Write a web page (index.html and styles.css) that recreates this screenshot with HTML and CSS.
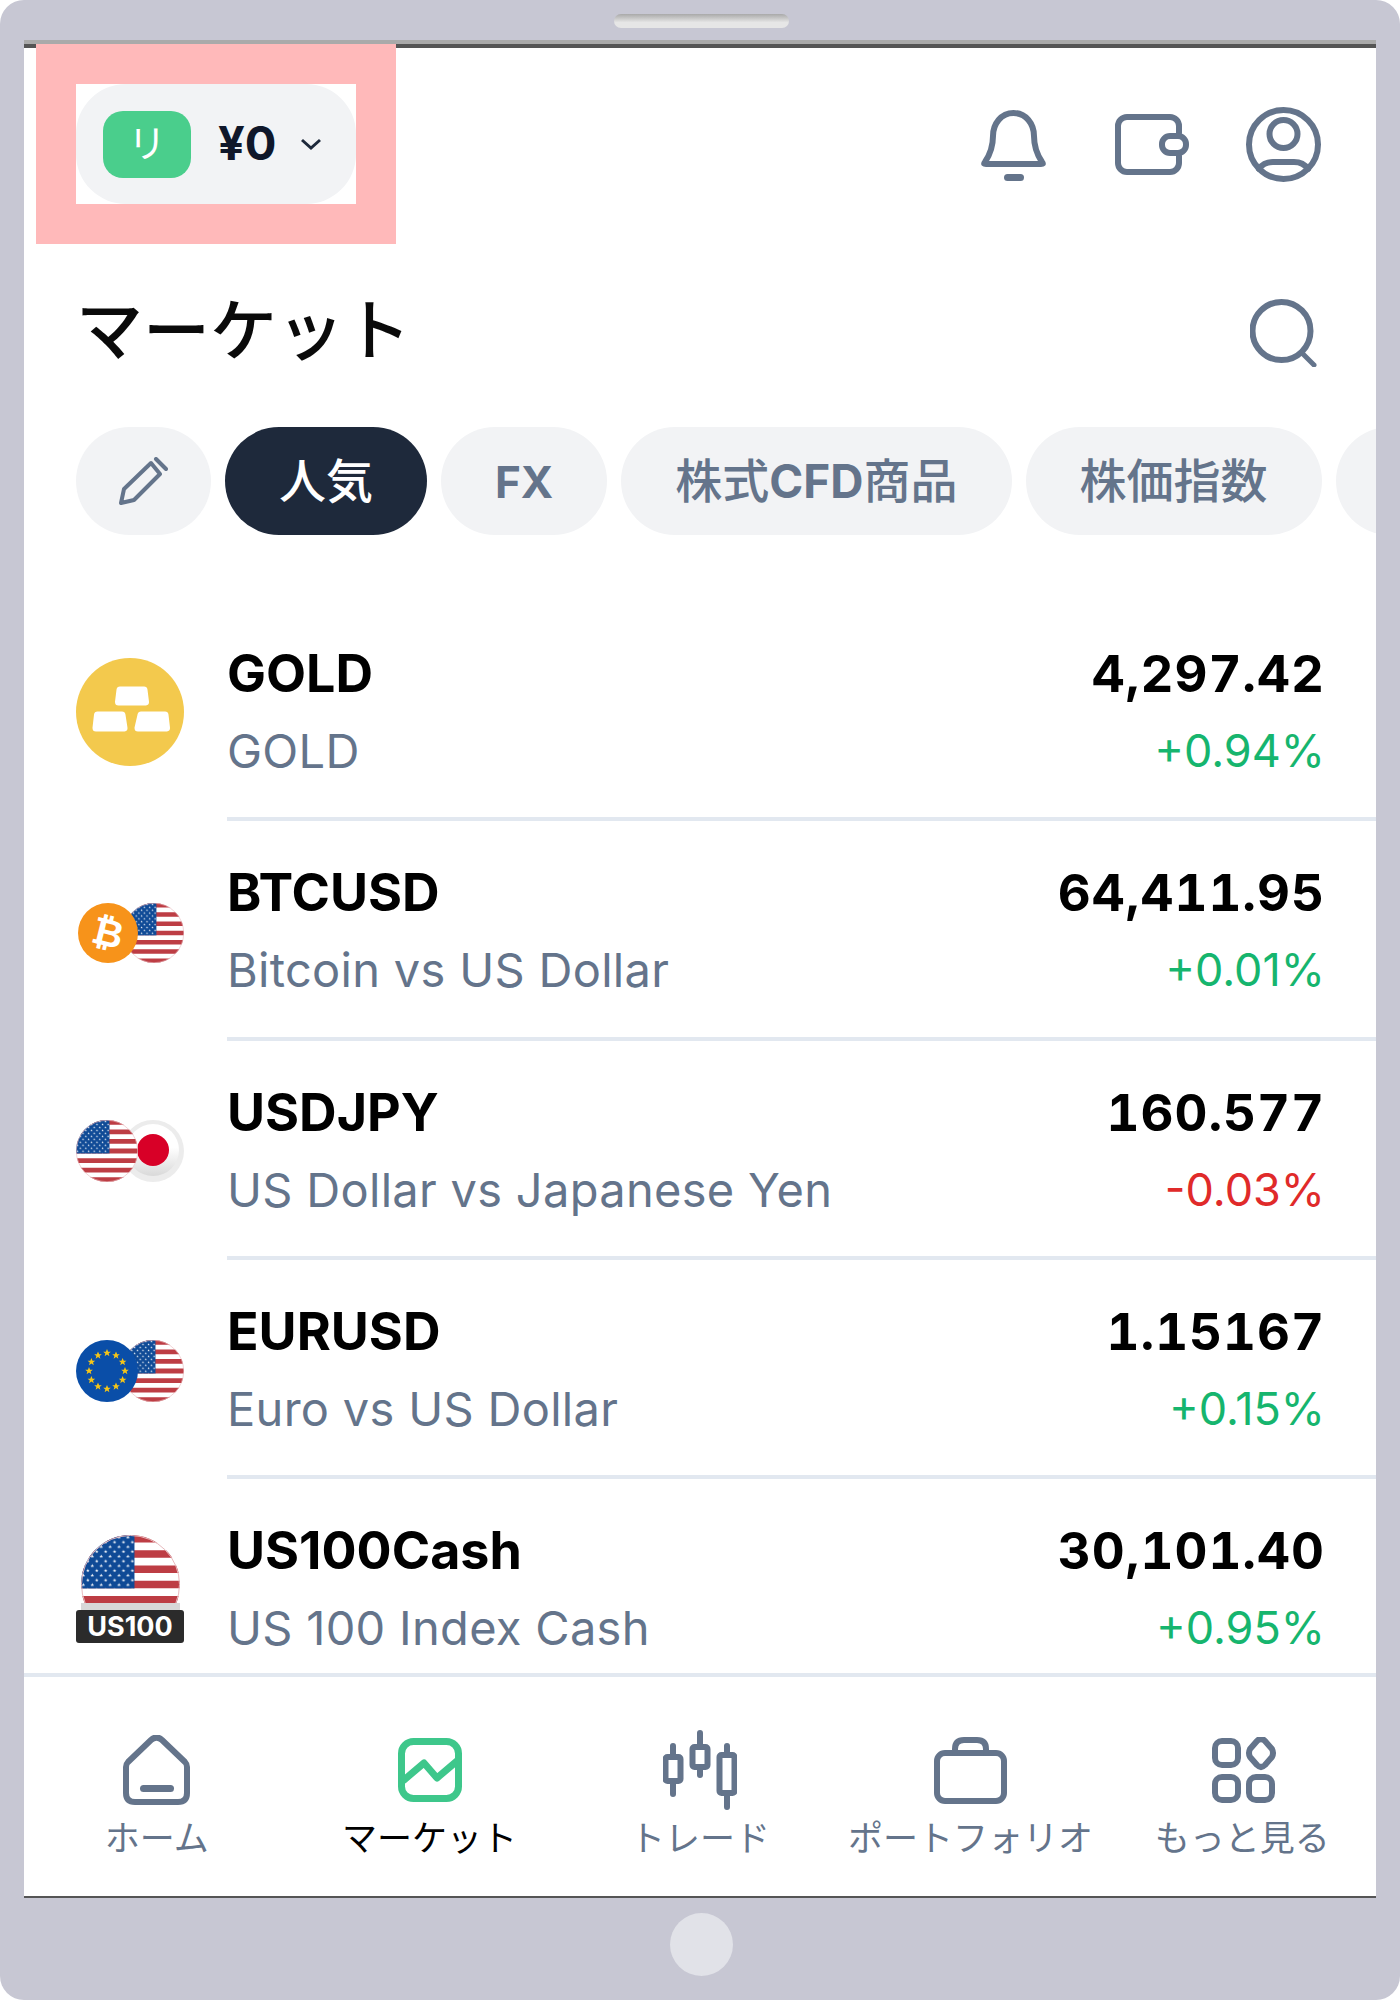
FILE: index.html
```html
<!DOCTYPE html>
<html lang="ja">
<head>
    <meta charset="utf-8">
    <title>マーケット</title>
    <link rel="stylesheet" href="styles.css">
</head>
<body>
    <svg class="defs" width="0" height="0">
        <defs>
            <polygon id="star" points="0,-1 0.29,-0.31 0.95,-0.31 0.41,0.12 0.59,0.81 0,0.38 -0.59,0.81 -0.41,0.12 -0.95,-0.31 -0.29,-0.31"/>
            <pattern id="usStars" width="9" height="9.6" patternUnits="userSpaceOnUse">
                <use href="#star" transform="translate(2.4 2.4) scale(1.9)" fill="#fff"/>
                <use href="#star" transform="translate(6.9 7.2) scale(1.9)" fill="#fff"/>
            </pattern>
            <clipPath id="roundClip"><circle cx="50" cy="50" r="50"/></clipPath>
            <symbol id="flagUs" viewBox="0 0 100 100">
                <g clip-path="url(#roundClip)">
                    <rect width="100" height="100" fill="#fff"/>
                    <path d="M0 3.8H100M0 19.2H100M0 34.6H100M0 50H100M0 65.4H100M0 80.8H100M0 96.2H100" stroke="#bd3d44" stroke-width="7.7"/>
                    <rect width="54" height="54" fill="#0f4a96"/>
                    <rect width="54" height="54" fill="url(#usStars)"/>
                </g>
                <circle cx="50" cy="50" r="49.5" fill="none" stroke="#e8b9bd" stroke-width="1"/>
            </symbol>
        </defs>
    </svg>

    <div class="device">
        <div class="bezel-top"><div class="speaker"></div></div>

        <div class="screen">
            <header class="topbar">
                <div class="highlight">
                    <div class="balance">
                        <span class="badge">リ</span>
                        <span class="amount">¥0</span>
                        <svg class="chevron" width="22" height="12" viewBox="0 0 22 12"><path d="M2 2L11 10L20 2"/></svg>
                    </div>
                </div>
                <div class="top-icons">
                    <svg class="icon bell" width="67" height="71" viewBox="0 0 67 71">
                        <path d="M33.5 3C21 3 13 14 13 26C13 36 11 43 5 52C3.5 54 4 54 6 54H61C63 54 63.5 54 62 52C56 43 54 36 54 26C54 14 46 3 33.5 3Z"/>
                        <rect class="solid" x="24" y="64" width="20" height="7" rx="3.5"/>
                    </svg>
                    <svg class="icon wallet" width="74" height="61" viewBox="0 0 74 61">
                        <path d="M64 19V12A9 9 0 0 0 55 3H12A9 9 0 0 0 3 12V49A9 9 0 0 0 12 58H55A9 9 0 0 0 64 49V42"/>
                        <rect x="47" y="22" width="24" height="17" rx="8"/>
                    </svg>
                    <svg class="icon profile" width="75" height="75" viewBox="0 0 75 75">
                        <circle cx="37.5" cy="37.5" r="34.5"/>
                        <circle cx="37.5" cy="27" r="14"/>
                        <path d="M13 62C17 56 22 55 27 55H48C53 55 58 56 62 62"/>
                    </svg>
                </div>
            </header>

            <div class="title-row">
                <h1 class="title">マーケット</h1>
                <svg class="icon search" width="67" height="68" viewBox="0 0 67 68">
                    <circle cx="31.5" cy="32" r="29"/>
                    <path class="thin" d="M52 54L64 66"/>
                </svg>
            </div>

            <nav class="tabs">
                <div class="tab tab-edit">
                    <svg class="icon pencil" width="49" height="48" viewBox="0 0 49 48">
                        <path d="M2 46L5 32L32 6L41 17L15 43Z"/>
                        <path d="M37 2L47 12"/>
                    </svg>
                </div>
                <div class="tab active">人気</div>
                <div class="tab tab-fx"><span class="latin">FX</span></div>
                <div class="tab">株式<span class="latin">CFD</span>商品</div>
                <div class="tab">株価指数</div>
                <div class="tab tab-empty"></div>
            </nav>

            <main class="list">
                <div class="row">
                    <div class="row-icon">
                        <svg width="108" height="108" viewBox="0 0 108 108">
                            <circle cx="54" cy="54" r="54" fill="#f3c94d"/>
                            <g fill="#fff" stroke="#fff" stroke-width="7" stroke-linejoin="round">
                                <polygon points="44,32 68,32 69.5,44 42.5,44"/>
                                <polygon points="21.5,57 46,57 48,70 20,70"/>
                                <polygon points="65,57 89,57 90.5,70 62,70"/>
                            </g>
                        </svg>
                    </div>
                    <div class="row-body">
                        <div class="row-left">
                            <div class="name">GOLD</div>
                            <div class="desc">GOLD</div>
                        </div>
                        <div class="row-right">
                            <div class="price">4,297.42</div>
                            <div class="change up">+0.94%</div>
                        </div>
                    </div>
                </div>

                <div class="row">
                    <div class="row-icon pair btc-pair">
                        <svg class="flag back" width="60" height="60"><use href="#flagUs"/></svg>
                        <svg class="flag front btc-coin" width="60" height="60" viewBox="0 0 60 60">
                            <circle cx="30" cy="30" r="30" fill="#f7931a"/>
                            <text class="btc" x="30" y="43" text-anchor="middle" transform="rotate(14 30 30)">₿</text>
                        </svg>
                    </div>
                    <div class="row-body">
                        <div class="row-left">
                            <div class="name">BTCUSD</div>
                            <div class="desc">Bitcoin vs US Dollar</div>
                        </div>
                        <div class="row-right">
                            <div class="price">64,411.95</div>
                            <div class="change up">+0.01%</div>
                        </div>
                    </div>
                </div>

                <div class="row">
                    <div class="row-icon pair">
                        <svg class="flag back" width="62" height="62" viewBox="0 0 62 62">
                            <defs>
                                <linearGradient id="jpShade" x1="0" y1="0" x2="0" y2="1">
                                    <stop offset="0.45" stop-color="#ffffff"/>
                                    <stop offset="1" stop-color="#d9d9d9"/>
                                </linearGradient>
                            </defs>
                            <circle cx="31" cy="31" r="31" fill="#ececec"/>
                            <circle cx="31" cy="30" r="26" fill="url(#jpShade)"/>
                            <circle cx="31" cy="30" r="16" fill="#d80027"/>
                        </svg>
                        <svg class="flag front" width="62" height="62"><use href="#flagUs"/></svg>
                    </div>
                    <div class="row-body">
                        <div class="row-left">
                            <div class="name">USDJPY</div>
                            <div class="desc">US Dollar vs Japanese Yen</div>
                        </div>
                        <div class="row-right">
                            <div class="price">160.577</div>
                            <div class="change down">-0.03%</div>
                        </div>
                    </div>
                </div>

                <div class="row">
                    <div class="row-icon pair">
                        <svg class="flag back" width="62" height="62"><use href="#flagUs"/></svg>
                        <svg class="flag front" width="62" height="62" viewBox="0 0 62 62">
                            <circle cx="31" cy="31" r="31" fill="#0a4ea8"/>
                            <g fill="#f5c518">
                                <use href="#star" transform="translate(31 13) scale(4)"/>
                                <use href="#star" transform="translate(40 15.4) scale(4)"/>
                                <use href="#star" transform="translate(46.6 22) scale(4)"/>
                                <use href="#star" transform="translate(49 31) scale(4)"/>
                                <use href="#star" transform="translate(46.6 40) scale(4)"/>
                                <use href="#star" transform="translate(40 46.6) scale(4)"/>
                                <use href="#star" transform="translate(31 49) scale(4)"/>
                                <use href="#star" transform="translate(22 46.6) scale(4)"/>
                                <use href="#star" transform="translate(15.4 40) scale(4)"/>
                                <use href="#star" transform="translate(13 31) scale(4)"/>
                                <use href="#star" transform="translate(15.4 22) scale(4)"/>
                                <use href="#star" transform="translate(22 15.4) scale(4)"/>
                            </g>
                        </svg>
                    </div>
                    <div class="row-body">
                        <div class="row-left">
                            <div class="name">EURUSD</div>
                            <div class="desc">Euro vs US Dollar</div>
                        </div>
                        <div class="row-right">
                            <div class="price">1.15167</div>
                            <div class="change up">+0.15%</div>
                        </div>
                    </div>
                </div>

                <div class="row">
                    <div class="row-icon index">
                        <div class="index-flag"><svg width="99" height="99"><use href="#flagUs"/></svg></div>
                        <div class="index-label">US100</div>
                    </div>
                    <div class="row-body">
                        <div class="row-left">
                            <div class="name">US100Cash</div>
                            <div class="desc">US 100 Index Cash</div>
                        </div>
                        <div class="row-right">
                            <div class="price">30,101.40</div>
                            <div class="change up">+0.95%</div>
                        </div>
                    </div>
                </div>
            </main>

            <footer class="bottom-nav">
                <div class="nav-item nav-home">
                    <div class="nav-icon">
                        <svg class="icon" width="67" height="70" viewBox="0 0 67 70">
                            <path d="M3 32Q3 29 5 27L28 5Q33.5 0 39 5L62 27Q64 29 64 32V58Q64 67 55 67H12Q3 67 3 58Z"/>
                            <rect class="solid" x="17" y="50" width="34" height="7" rx="3.5"/>
                        </svg>
                    </div>
                    <span class="nav-label">ホーム</span>
                </div>
                <div class="nav-item current">
                    <div class="nav-icon">
                        <svg class="icon market" width="64" height="64" viewBox="0 0 64 64">
                            <rect x="3.5" y="3.5" width="57" height="57" rx="12"/>
                            <path d="M6 42L26 25L39 40L59 23"/>
                        </svg>
                    </div>
                    <span class="nav-label">マーケット</span>
                </div>
                <div class="nav-item">
                    <div class="nav-icon">
                        <svg class="icon" width="74" height="80" viewBox="0 0 74 80">
                            <path d="M10 16V27M10 51V64M37 3V17M37 37V45M64 16V25M64 63V77"/>
                            <rect x="2.5" y="27" width="15" height="24" rx="2"/>
                            <rect x="29.5" y="17" width="15" height="20" rx="2"/>
                            <rect x="56.5" y="25" width="15" height="38" rx="2"/>
                        </svg>
                    </div>
                    <span class="nav-label">トレード</span>
                </div>
                <div class="nav-item">
                    <div class="nav-icon">
                        <svg class="icon" width="73" height="67" viewBox="0 0 73 67">
                            <rect x="3" y="16" width="67" height="48" rx="8"/>
                            <path d="M21 16V12Q21 3 30 3H43Q52 3 52 12V16"/>
                        </svg>
                    </div>
                    <span class="nav-label">ポートフォリオ</span>
                </div>
                <div class="nav-item nav-more">
                    <div class="nav-icon">
                        <svg class="icon" width="65" height="66" viewBox="0 0 65 66">
                            <rect x="3" y="4" width="23" height="24" rx="7"/>
                            <rect x="3" y="40" width="23" height="23" rx="7"/>
                            <rect x="37" y="40" width="23" height="23" rx="7"/>
                            <path d="M45 4Q49 0 53 4L60 12Q62 16 60 20L53 28Q49 32 45 28L38 20Q36 16 38 12Z"/>
                        </svg>
                    </div>
                    <span class="nav-label">もっと見る</span>
                </div>
            </footer>
        </div>

        <div class="bezel-bottom"><div class="home-button"></div></div>
    </div>
</body>
</html>
```

FILE: styles.css
```css
* {
    box-sizing: border-box;
}
body {
    margin: 0;
    background-color: #fff;
    font-family: Inter, "Noto Sans CJK JP", sans-serif;
}
.defs {
    display: block;
    height: 0;
}
.device {
    display: flex;
    flex-direction: column;
    width: 1400px;
    height: 2000px;
    padding: 0 24px;
    background-color: #c7c7d3;
    border-radius: 24px;
}
.bezel-top {
    display: flex;
    justify-content: center;
    height: 40px;
    padding: 14px 0 0 3px;
}
.speaker {
    width: 175px;
    height: 14px;
    border-radius: 7px;
    background: linear-gradient(#a9a9a9, #e6e6e6 60%);
}
.screen {
    flex: 1;
    display: flex;
    flex-direction: column;
    min-height: 0;
    background-color: #fff;
    border-top: 4px solid #aaa;
    box-shadow: inset 0 4px 0 #555;
    border-bottom: 2px solid #555;
}
.bezel-bottom {
    display: flex;
    justify-content: center;
    height: 102px;
    padding: 15px 0 0 3px;
}
.home-button {
    width: 63px;
    height: 63px;
    border-radius: 50%;
    background-color: #e1e2e8;
}

/* top bar */
.topbar {
    display: flex;
    align-items: center;
    justify-content: space-between;
    padding: 0 55px 0 12px;
}
.highlight {
    width: 360px;
    height: 200px;
    border: 40px solid #ffb9ba;
    background-color: #fff;
}
.balance {
    display: flex;
    align-items: center;
    height: 100%;
    padding-left: 27px;
    border-radius: 50px;
    background-color: #f2f3f5;
}
.badge {
    width: 88px;
    height: 67px;
    border-radius: 20px;
    background-color: #4ace8c;
    color: #fff;
    font-size: 38px;
    line-height: 64px;
    text-align: center;
}
.amount {
    margin: 0 0 3px 27px;
    color: #0f172a;
    font-size: 47px;
    font-weight: 700;
}
.chevron {
    margin-left: 23px;
    fill: none;
    stroke: #1e293b;
    stroke-width: 3;
}
.top-icons {
    display: flex;
    align-items: center;
}
.icon {
    display: block;
    flex: none;
    fill: none;
    stroke: #64748b;
    stroke-width: 6;
    stroke-linecap: round;
    stroke-linejoin: round;
}
.icon .solid {
    fill: #64748b;
    stroke: none;
}
.icon .thin {
    stroke-width: 5;
}
.bell {
    margin: 2px 68px 0 0;
}
.wallet {
    margin-right: 57px;
}
.search {
    margin-top: 3px;
}

/* title */
.title-row {
    display: flex;
    align-items: center;
    justify-content: space-between;
    margin-top: 43px;
    padding: 0 59px 0 52px;
}
.title {
    margin: 0;
    color: #0a0a0a;
    font-size: 67px;
    font-weight: 500;
    line-height: 88px;
}

/* tabs */
.tabs {
    display: flex;
    gap: 14px;
    margin-top: 52px;
    padding-left: 52px;
    overflow: hidden;
}
.tab {
    flex: none;
    height: 108px;
    padding: 0 54px;
    border-radius: 54px;
    background-color: #f2f3f5;
    color: #64748b;
    font-size: 47px;
    font-weight: 500;
    line-height: 108px;
}
.latin {
    font-size: 46px;
    font-weight: 700;
}
.tab-fx .latin {
    font-size: 44px;
}
.tab.active {
    background-color: #1e293b;
    color: #fff;
}
.tab-edit {
    display: flex;
    align-items: center;
    justify-content: center;
    width: 135px;
    padding: 0;
}
.pencil {
    stroke-width: 4;
}
.tab-empty {
    width: 120px;
}

/* instrument list */
.list {
    flex: 1;
    min-height: 0;
    margin-top: 67px;
    overflow: hidden;
}
.row {
    display: flex;
    height: 219.3px;
    padding-left: 52px;
}
.row-icon {
    flex: none;
    display: flex;
    align-items: center;
    width: 108px;
    margin-right: 43px;
}
.pair {
    position: relative;
}
.flag {
    position: absolute;
    top: 50%;
    margin-top: -30px;
}
.btc-pair .flag {
    margin-top: -28px;
}
.flag.back {
    right: 0;
}
.flag.front {
    left: 0;
}
.flag.btc-coin {
    left: 2px;
}
.btc {
    fill: #fff;
    font-family: "DejaVu Sans", sans-serif;
    font-size: 38px;
    font-weight: 700;
}
.index {
    flex-direction: column;
    justify-content: center;
}
.index-flag {
    height: 75px;
    overflow: hidden;
    border-bottom: 7px solid #d8d8d8;
}
.index-flag svg {
    display: block;
}
.index-label {
    width: 108px;
    height: 33px;
    border-radius: 3px;
    background-color: #2b2b2b;
    color: #fff;
    font-size: 27px;
    font-weight: 700;
    line-height: 33px;
    text-align: center;
}
.row-body {
    flex: 1;
    display: flex;
    align-items: center;
    justify-content: space-between;
    padding: 6px 51px 0 0;
    border-bottom: 4px solid #e2e8f0;
}
.name, .price {
    color: #000;
    font-weight: 700;
    line-height: 76px;
}
.name {
    font-size: 52px;
}
.price {
    font-size: 51px;
    font-variant-numeric: tabular-nums;
    letter-spacing: 1px;
    text-align: right;
}
.desc, .change {
    line-height: 77px;
}
.desc {
    color: #64748b;
    font-size: 47px;
    letter-spacing: 0.3px;
}
.change {
    font-size: 45px;
    text-align: right;
}
.up {
    color: #16b56e;
}
.down {
    color: #e02a2a;
}

/* bottom nav */
.bottom-nav {
    display: grid;
    grid-template-columns: repeat(5, 1fr);
    height: 223px;
    padding-top: 53px;
    border-top: 4px solid #e2e8f0;
    flex: none;
}
.nav-item {
    display: flex;
    flex-direction: column;
    align-items: center;
}
.nav-home {
    padding-right: 5px;
}
.nav-more {
    padding-left: 3px;
}
.nav-more .icon {
    margin-left: 4px;
}
.nav-icon {
    display: flex;
    align-items: center;
    height: 80px;
}
.market {
    stroke: #3ec78b;
    stroke-width: 7;
}
.nav-label {
    margin-top: 4px;
    color: #64748b;
    font-size: 35px;
    line-height: 48px;
    white-space: nowrap;
}
.current .nav-label {
    color: #000;
}
```
